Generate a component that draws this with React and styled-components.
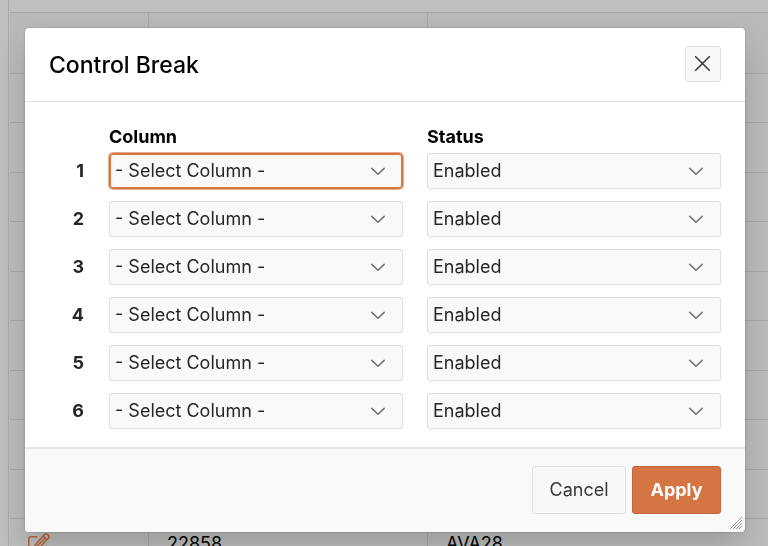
import React, { Component } from 'react';
import styled, { createGlobalStyle } from 'styled-components';

const GlobalStyle = createGlobalStyle`
  * {
    box-sizing: border-box;
  }
  body {
    margin: 0;
    background: #bfbfbf;
    color: #262626;
    font-family: Inter, "Liberation Sans", sans-serif;
    font-size: 18px;
  }
  button, select {
    font-family: inherit;
    font-size: inherit;
  }
`;

const Page = styled.div`
  height: 100vh;
  overflow: hidden;
`;

const Report = styled.div`
  margin-left: 8px;
  padding: 12px 0 0 1px;
  border-left: 1px solid #a9a9a9;
`;

const ReportTable = styled.table`
  width: 100%;
  border-collapse: separate;
  border-spacing: 0;
  table-layout: fixed;
  background: #bcbcbc;
  border-top: 1px solid #a6a6a6;
`;

const ReportHead = styled.th`
  width: ${(props) => props.$width || 'auto'};
  height: 61px;
  padding: 0;
  background: #b9b9b9;
  border-right: 1px solid #a6a6a6;
  border-bottom: 1px solid #a8a8a8;
  &:last-child {
    border-right: none;
  }
`;

const ReportCell = styled.td`
  height: 49px;
  padding: 0 18px;
  color: #000;
  line-height: 20px;
  border-right: 1px solid #a6a6a6;
  border-bottom: 1px solid #a8a8a8;
  &:last-child {
    border-right: none;
  }
  tr:nth-child(even) & {
    height: 50px;
  }
`;

const EditLink = styled.a`
  display: flex;
  color: #b56238;
`;

const Overlay = styled.div`
  position: fixed;
  inset: 0;
  display: flex;
  align-items: flex-start;
  justify-content: center;
  padding: 28px 23px 14px 25px;
`;

const Dialog = styled.section`
  position: relative;
  width: 100%;
  max-width: 720px;
  background: #fff;
  border-radius: 4px;
  box-shadow: 0 0 2px rgba(0, 0, 0, 0.3), 0 16px 32px -4px rgba(0, 0, 0, 0.2);
`;

const DialogHeader = styled.header`
  display: flex;
  align-items: center;
  justify-content: space-between;
  padding: 18px 24px 19px;
  border-bottom: 1px solid #e2e2e2;
`;

const Title = styled.h1`
  margin: 0;
  padding-top: 2px;
  color: #000;
  font-size: 23px;
  font-weight: 500;
  line-height: 32px;
`;

const CloseButton = styled.button`
  display: flex;
  align-items: center;
  justify-content: center;
  width: 36px;
  height: 36px;
  padding: 0;
  color: #383838;
  background: #f8f8f8;
  border: 1px solid #dfdfdf;
  border-radius: 3px;
`;

const Form = styled.div`
  display: grid;
  grid-template-columns: 36px 1fr 1fr;
  gap: 12px 24px;
  padding: 24px 24px 18px;
`;

const ColumnTitle = styled.div`
  margin-bottom: -6px;
  color: #000;
  font-weight: 700;
  line-height: 21px;
`;

const RowNumber = styled.label`
  padding-right: 1px;
  color: #262626;
  font-weight: 700;
  line-height: 36px;
  text-align: right;
`;

const SelectBox = styled.div`
  display: grid;
  align-items: center;
  > * {
    grid-area: 1 / 1;
  }
  svg {
    justify-self: end;
    margin-right: 17px;
    pointer-events: none;
  }
`;

const Select = styled.select`
  appearance: none;
  width: 100%;
  height: 36px;
  padding: 0 40px 2px 5px;
  color: #262626;
  background: #f9f9f9;
  border: 1px solid #dfdfdf;
  border-radius: 3px;
  outline: none;
  &:focus {
    border-color: #d67544;
    border-radius: 4px;
    box-shadow: inset 0 0 0 1px #d67544, 0 0 0 1px #e6ac8f;
  }
`;

const DialogFooter = styled.footer`
  display: flex;
  justify-content: flex-end;
  gap: 6px;
  padding: 17px 24px 18px;
  background: #f9f9f9;
  border-top: 2px solid #e6e6e6;
  border-radius: 0 0 4px 4px;
`;

const Button = styled.button`
  min-width: ${(props) => (props.$hot ? '89px' : '94px')};
  height: 48px;
  padding: 0 16px 2px;
  color: ${(props) => (props.$hot ? '#fff' : '#383838')};
  font-weight: ${(props) => (props.$hot ? 700 : 400)};
  background: ${(props) => (props.$hot ? '#d67544' : '#f8f8f8')};
  border: 1px solid ${(props) => (props.$hot ? '#c4683a' : '#dfdfdf')};
  border-radius: 3px;
`;

const ResizeHandle = styled.svg`
  position: absolute;
  right: 3px;
  bottom: 3px;
`;

const Chevron = () => (
  <svg width="16" height="16" viewBox="0 0 16 16" fill="none" stroke="#707070" strokeWidth="1.5" strokeLinecap="round" strokeLinejoin="round">
    <path d="M1.8 5.4 8 11.2l6.2-5.8" />
  </svg>
);

const CloseIcon = () => (
  <svg width="18" height="18" viewBox="0 0 18 18" fill="none" stroke="currentColor" strokeWidth="1.5">
    <path d="M1.2 1.2 15.8 15.8M15.8 1.2 1.2 15.8" />
  </svg>
);

const EditIcon = () => (
  <svg width="22" height="22" viewBox="0 0 22 22" fill="none" stroke="currentColor" strokeWidth="1.5" strokeLinecap="round" strokeLinejoin="round">
    <path d="M8.8 3.7H3.2Q.8 3.7.8 6.1v12.5Q.8 21 3.2 21h12.6q2.4 0 2.4-2.4V13" />
    <path d="M16.2 1.8q1.3-1.3 2.8-.7 2.9 1.6 1.6 4L10.4 15.7l-4.6 1.2 1.2-4.6zM15 3l4 3.8M16.6 5.4 9 13.2" />
  </svg>
);

const rows = [1, 2, 3, 4, 5, 6];
const records = ['', '', '', '', '', '', '', '', '', 'AVA28'];

class ReportBackground extends Component {
  render() {
    return (
      <Report>
        <ReportTable>
          <thead>
            <tr>
              <ReportHead $width="139px" />
              <ReportHead $width="279px" />
              <ReportHead />
            </tr>
          </thead>
          <tbody>
            {records.map((code, index) => (
              <tr key={index}>
                <ReportCell>
                  {code && <EditLink href="#edit" aria-label="Edit"><EditIcon /></EditLink>}
                </ReportCell>
                <ReportCell>{code && '22858'}</ReportCell>
                <ReportCell>{code}</ReportCell>
              </tr>
            ))}
          </tbody>
        </ReportTable>
      </Report>
    );
  }
}

class ControlBreak extends Component {
  render() {
    return (
      <Dialog role="dialog" aria-labelledby="dialog-title">
        <DialogHeader>
          <Title id="dialog-title">Control Break</Title>
          <CloseButton type="button" aria-label="Close"><CloseIcon /></CloseButton>
        </DialogHeader>
        <Form>
          <span />
          <ColumnTitle id="column-title">Column</ColumnTitle>
          <ColumnTitle id="status-title">Status</ColumnTitle>
          {rows.map((row) => (
            <React.Fragment key={row}>
              <RowNumber id={`row-${row}`} htmlFor={`column-${row}`}>{row}</RowNumber>
              <SelectBox>
                <Select id={`column-${row}`} aria-labelledby={`column-title row-${row}`} autoFocus={row === 1}>
                  <option>- Select Column -</option>
                </Select>
                <Chevron />
              </SelectBox>
              <SelectBox>
                <Select aria-labelledby={`status-title row-${row}`}>
                  <option>Enabled</option>
                  <option>Disabled</option>
                </Select>
                <Chevron />
              </SelectBox>
            </React.Fragment>
          ))}
        </Form>
        <DialogFooter>
          <Button type="button">Cancel</Button>
          <Button type="button" $hot>Apply</Button>
        </DialogFooter>
        <ResizeHandle width="12" height="12" viewBox="0 0 12 12" stroke="#999" strokeWidth="1">
          <path d="M0 12 12 0M3 12l9-9M6 12l6-6M9 12l3-3" />
        </ResizeHandle>
      </Dialog>
    );
  }
}

class App extends Component {
  render() {
    return (
      <Page>
        <GlobalStyle />
        <ReportBackground />
        <Overlay>
          <ControlBreak />
        </Overlay>
      </Page>
    );
  }
}

export default App;
